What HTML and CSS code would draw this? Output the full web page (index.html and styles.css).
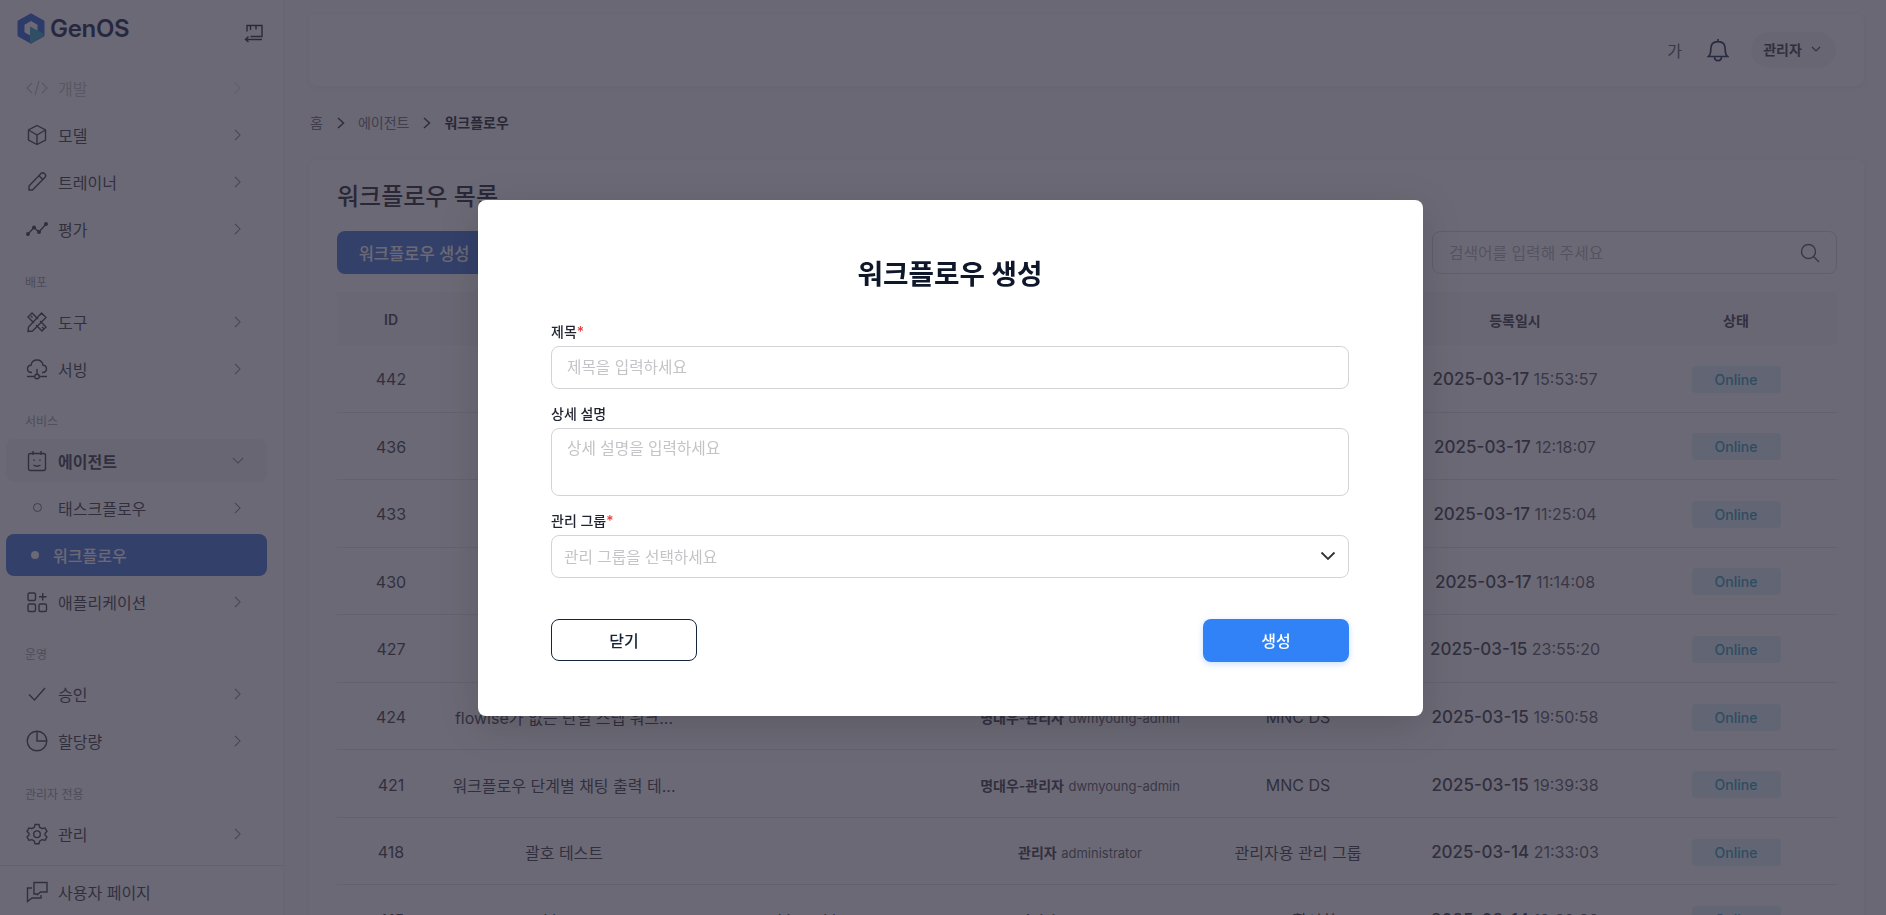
FILE: index.html
```html
<!DOCTYPE html>
<html lang="ko">
  <head>
    <meta charset="UTF-8" />
    <meta name="viewport" content="width=device-width, initial-scale=1.0" />
    <title>워크플로우 생성</title>
    <link rel="stylesheet" href="styles.css">
  </head>
  <body>
    <!-- Sidebar -->
    <aside class="sidebar">
      <div class="logo-row">
        <div class="logo">
          <svg width="28" height="31" viewBox="0 0 28 31">
            <path fill="#2a62d8" fill-rule="evenodd" stroke="#2a62d8" stroke-width="1" stroke-linejoin="round" d="M14 .8L27 8V23L14 30.200L1 23V8ZM14 7.500L7 11.500V19.500L14 23.500L21 19.500V11.500Z" />
            <path fill="#3aa6c4" d="M13 13.500L26.500 20.500V23L14 30.500L13 30Z" />
          </svg>
          <span class="logo-text">GenOS</span>
        </div>
        <button class="collapse-btn">
          <svg width="20" height="20" viewBox="0 0 20 20" fill="none" stroke="currentColor" stroke-width="1.4">
            <path d="M3 9V3H18V14H6.500M6.500 3V7.500M12 3V7M1.500 17H18M4.500 14L1.500 17L4.500 19.500" transform="translate(0 -.5)" />
          </svg>
        </button>
      </div>

      <nav class="nav">
        <a class="nav-item nav-item-faded">
          <svg class="nav-icon" viewBox="0 0 22 22" fill="none" stroke="currentColor" stroke-width="1.3"><path d="M6 6L1 11L6 16M16 6L21 11L16 16M13 4L9 18" /></svg>
          <span class="nav-label">개발</span>
          <svg class="nav-chevron" viewBox="0 0 8 14" fill="none" stroke="currentColor" stroke-width="1.2"><path d="M1 1L7 7L1 13" /></svg>
        </a>
        <a class="nav-item">
          <svg class="nav-icon" viewBox="0 0 22 22" fill="none" stroke="currentColor" stroke-width="1.4"><path d="M11 1.500L19.500 6V16L11 20.500L2.500 16V6ZM2.500 6L11 11L19.500 6M11 11V20.500" /></svg>
          <span class="nav-label">모델</span>
          <svg class="nav-chevron" viewBox="0 0 8 14" fill="none" stroke="currentColor" stroke-width="1.2"><path d="M1 1L7 7L1 13" /></svg>
        </a>
        <a class="nav-item">
          <svg class="nav-icon" viewBox="0 0 22 22" fill="none" stroke="currentColor" stroke-width="1.4"><path d="M3 15L15 2.500C16 1.500 17.500 1.500 18.700 2.700C19.900 3.900 19.900 5.300 19 6.300L6.500 19H3ZM13 4.800L17 8.800" /></svg>
          <span class="nav-label">트레이너</span>
          <svg class="nav-chevron" viewBox="0 0 8 14" fill="none" stroke="currentColor" stroke-width="1.2"><path d="M1 1L7 7L1 13" /></svg>
        </a>
        <a class="nav-item">
          <svg class="nav-icon" viewBox="0 0 22 22" fill="none" stroke="currentColor" stroke-width="1.4"><path d="M2 16L8 9.500L13 14L20 6" /><circle cx="2" cy="16" r="1.300" fill="currentColor" /><circle cx="8" cy="9.500" r="1.300" fill="currentColor" /><circle cx="13" cy="14" r="1.300" fill="currentColor" /><circle cx="20" cy="6" r="1.300" fill="currentColor" /></svg>
          <span class="nav-label">평가</span>
          <svg class="nav-chevron" viewBox="0 0 8 14" fill="none" stroke="currentColor" stroke-width="1.2"><path d="M1 1L7 7L1 13" /></svg>
        </a>

        <div class="nav-group nav-group-wide">배포</div>
        <a class="nav-item">
          <svg class="nav-icon" viewBox="0 0 22 22" fill="none" stroke="currentColor" stroke-width="1.4"><path d="M15.500 2L20 6.500L6.500 20L2 20.500L2.500 16ZM8 12L2 6L6 2L12 8M14 10L20 16L16 20L10 14M5 5L6.500 6.500M16 16L17.500 17.500" /></svg>
          <span class="nav-label">도구</span>
          <svg class="nav-chevron" viewBox="0 0 8 14" fill="none" stroke="currentColor" stroke-width="1.2"><path d="M1 1L7 7L1 13" /></svg>
        </a>
        <a class="nav-item">
          <svg class="nav-icon" viewBox="0 0 22 22" fill="none" stroke="currentColor" stroke-width="1.4"><path d="M6 14.500H5.500C3 14.500 1.500 12.800 1.500 10.800C1.500 8.800 3 7.300 5 7.200C5.500 4 8 2 11 2C14 2 16.500 4 17 7.200C19 7.300 20.500 8.800 20.500 10.800C20.500 12.800 19 14.500 16.500 14.500H16M11 11V16M1 18.500H8.500M13.500 18.500H21" /><circle cx="11" cy="18.500" r="2.300" /></svg>
          <span class="nav-label">서빙</span>
          <svg class="nav-chevron" viewBox="0 0 8 14" fill="none" stroke="currentColor" stroke-width="1.2"><path d="M1 1L7 7L1 13" /></svg>
        </a>

        <div class="nav-group">서비스</div>
        <a class="nav-item nav-item-open">
          <svg class="nav-icon" viewBox="0 0 22 22" fill="none" stroke="currentColor" stroke-width="1.4"><rect x="2.500" y="3.500" width="17" height="17" rx="2" /><path d="M7 1V5M15 1V5M8 9.500V11M14 9.500V11M7.500 15C9.500 16.500 12.500 16.500 14.500 15" /></svg>
          <span class="nav-label">에이전트</span>
          <svg class="nav-chevron-down" viewBox="0 0 14 8" fill="none" stroke="currentColor" stroke-width="1.2"><path d="M1 1L7 7L13 1" /></svg>
        </a>
        <a class="nav-item">
          <span class="nav-dot-wrap"><span class="nav-dot"></span></span>
          <span class="nav-label">태스크플로우</span>
          <svg class="nav-chevron" viewBox="0 0 8 14" fill="none" stroke="currentColor" stroke-width="1.2"><path d="M1 1L7 7L1 13" /></svg>
        </a>
        <a class="nav-item nav-item-active">
          <span class="nav-dot-wrap"><span class="nav-dot nav-dot-filled"></span></span>
          <span class="nav-label">워크플로우</span>
        </a>
        <a class="nav-item">
          <svg class="nav-icon" viewBox="0 0 22 22" fill="none" stroke="currentColor" stroke-width="1.4"><rect x="2" y="2" width="7.500" height="7.500" rx="1.500" /><rect x="2" y="13" width="7.500" height="7.500" rx="1.500" /><rect x="13" y="13" width="7.500" height="7.500" rx="1.500" /><path d="M16.700 2V9.500M13 5.700H20.500" /></svg>
          <span class="nav-label">애플리케이션</span>
          <svg class="nav-chevron" viewBox="0 0 8 14" fill="none" stroke="currentColor" stroke-width="1.2"><path d="M1 1L7 7L1 13" /></svg>
        </a>

        <div class="nav-group">운영</div>
        <a class="nav-item">
          <svg class="nav-icon" viewBox="0 0 22 22" fill="none" stroke="currentColor" stroke-width="1.4"><path d="M3 11.500L8.500 17L19 5" /></svg>
          <span class="nav-label">승인</span>
          <svg class="nav-chevron" viewBox="0 0 8 14" fill="none" stroke="currentColor" stroke-width="1.2"><path d="M1 1L7 7L1 13" /></svg>
        </a>
        <a class="nav-item">
          <svg class="nav-icon" viewBox="0 0 22 22" fill="none" stroke="currentColor" stroke-width="1.4"><circle cx="11" cy="11" r="9.800" /><path d="M11 1.200V11H20.800" /></svg>
          <span class="nav-label">할당량</span>
          <svg class="nav-chevron" viewBox="0 0 8 14" fill="none" stroke="currentColor" stroke-width="1.2"><path d="M1 1L7 7L1 13" /></svg>
        </a>

        <div class="nav-group nav-group-wide">관리자 전용</div>
        <a class="nav-item">
          <svg class="nav-icon" viewBox="0 0 22 22" fill="none" stroke="currentColor" stroke-width="1.4"><path d="M9 1.500H13L13.700 4.300L16.200 5.700L19 4.900L21 8.300L19 10.400V12L21 14L19 17.400L16.200 16.600L13.700 18L13 20.800H9L8.300 18L5.800 16.600L3 17.400L1 14L3 12V10.400L1 8.300L3 4.900L5.800 5.700L8.300 4.300Z" stroke-linejoin="round" /><circle cx="11" cy="11.200" r="3.300" /></svg>
          <span class="nav-label">관리</span>
          <svg class="nav-chevron" viewBox="0 0 8 14" fill="none" stroke="currentColor" stroke-width="1.2"><path d="M1 1L7 7L1 13" /></svg>
        </a>
      </nav>

      <a class="user-page">
        <svg class="nav-icon" viewBox="0 0 22 22" fill="none" stroke="currentColor" stroke-width="1.4"><path d="M8 13V1.500H21V11H14.500L11.500 13.500V13ZM6 7H1.500V20.500L6 17H15V14" /></svg>
        <span class="nav-label">사용자 페이지</span>
      </a>
    </aside>

    <!-- Main content -->
    <main class="main">
      <header class="topbar">
        <span class="font-size-btn">가</span>
        <svg class="bell" width="22" height="24" viewBox="0 0 22 24" fill="none" stroke="#1d2a4d" stroke-width="1.700"><path d="M1.500 18.500C3.500 17 3.800 15 3.800 11C3.800 6.500 6.500 3.700 11 3.700C15.500 3.700 18.200 6.500 18.200 11C18.200 15 18.500 17 20.500 18.500ZM11 1V3.700M7.500 18.500C7.500 24 14.500 24 14.500 18.500" /></svg>
        <div class="user-pill">
          <span>관리자</span>
          <svg width="10" height="6" viewBox="0 0 10 6" fill="none" stroke="currentColor" stroke-width="1.100"><path d="M1 1L5 5L9 1" /></svg>
        </div>
      </header>

      <div class="breadcrumb">
        <span>홈</span>
        <svg class="crumb-arrow" viewBox="0 0 8 12" fill="none" stroke="currentColor" stroke-width="1.500"><path d="M1 1L6.500 6L1 11" /></svg>
        <span>에이전트</span>
        <svg class="crumb-arrow" viewBox="0 0 8 12" fill="none" stroke="currentColor" stroke-width="1.500"><path d="M1 1L6.500 6L1 11" /></svg>
        <span class="crumb-current">워크플로우</span>
      </div>

      <section class="panel">
        <h1 class="panel-title">워크플로우 목록</h1>
        <div class="toolbar">
          <button class="btn-new">워크플로우 생성</button>
          <div class="search">
            <span class="search-text">검색어를 입력해 주세요</span>
            <svg width="20" height="20" viewBox="0 0 20 20" fill="none" stroke="currentColor" stroke-width="1.400"><circle cx="8.500" cy="8.500" r="7" /><path d="M13.500 13.500L19 19" /></svg>
          </div>
        </div>

        <div class="table">
          <div class="row row-head">
            <div>ID</div><div></div><div></div><div></div><div></div><div>등록일시</div><div>상태</div>
          </div>
          <div class="row">
            <div>442</div><div></div><div></div><div></div><div></div>
            <div><span class="date">2025-03-17</span> <span class="time">15:53:57</span></div>
            <div><span class="badge">Online</span></div>
          </div>
          <div class="row">
            <div>436</div><div></div><div></div><div></div><div></div>
            <div><span class="date">2025-03-17</span> <span class="time">12:18:07</span></div>
            <div><span class="badge">Online</span></div>
          </div>
          <div class="row">
            <div>433</div><div></div><div></div><div></div><div></div>
            <div><span class="date">2025-03-17</span> <span class="time">11:25:04</span></div>
            <div><span class="badge">Online</span></div>
          </div>
          <div class="row">
            <div>430</div><div></div><div></div><div></div><div></div>
            <div><span class="date">2025-03-17</span> <span class="time">11:14:08</span></div>
            <div><span class="badge">Online</span></div>
          </div>
          <div class="row">
            <div>427</div><div></div><div></div><div></div><div></div>
            <div><span class="date">2025-03-15</span> <span class="time">23:55:20</span></div>
            <div><span class="badge">Online</span></div>
          </div>
          <div class="row">
            <div>424</div><div class="cell-title">flowise가 없는 단일 스텝 워크...</div><div></div>
            <div><span class="owner">명대우-관리자</span> <span class="owner-id">dwmyoung-admin</span></div>
            <div>MNC DS</div>
            <div><span class="date">2025-03-15</span> <span class="time">19:50:58</span></div>
            <div><span class="badge">Online</span></div>
          </div>
          <div class="row">
            <div>421</div><div class="cell-title">워크플로우 단계별 채팅 출력 테...</div><div></div>
            <div><span class="owner">명대우-관리자</span> <span class="owner-id">dwmyoung-admin</span></div>
            <div>MNC DS</div>
            <div><span class="date">2025-03-15</span> <span class="time">19:39:38</span></div>
            <div><span class="badge">Online</span></div>
          </div>
          <div class="row">
            <div>418</div><div class="cell-title">괄호 테스트</div><div></div>
            <div><span class="owner">관리자</span> <span class="owner-id">administrator</span></div>
            <div>관리자용 관리 그룹</div>
            <div><span class="date">2025-03-14</span> <span class="time">21:33:03</span></div>
            <div><span class="badge">Online</span></div>
          </div>
          <div class="row">
            <div>415</div><div class="cell-title">kltest</div><div>kltest kltest</div>
            <div><span class="owner">관리자</span> <span class="owner-id">administrator</span></div>
            <div>NUI 활성화</div>
            <div><span class="date">2025-03-14</span> <span class="time">19:39:39</span></div>
            <div><span class="badge">Online</span></div>
          </div>
        </div>
      </section>
    </main>

    <!-- Dialog -->
    <div class="dialog-overlay">
      <div class="dialog">
        <h2 class="dialog-title">워크플로우 생성</h2>
        <form class="dialog-form">
          <div class="form-group">
            <label class="form-label">제목<span class="required">*</span></label>
            <div class="form-control">제목을 입력하세요</div>
          </div>
          <div class="form-group">
            <label class="form-label">상세 설명</label>
            <div class="form-control form-control-area">상세 설명을 입력하세요</div>
          </div>
          <div class="form-group">
            <label class="form-label">관리 그룹<span class="required">*</span></label>
            <div class="form-control form-control-select">
              <span>관리 그룹을 선택하세요</span>
              <svg width="16" height="10" viewBox="0 0 16 10" fill="none" stroke="#333" stroke-width="1.800"><path d="M1.500 1.500L8 8L14.500 1.500" /></svg>
            </div>
          </div>
          <div class="form-actions">
            <button type="button" class="btn btn-outline">닫기</button>
            <button type="button" class="btn btn-primary">생성</button>
          </div>
        </form>
      </div>
    </div>
  </body>
</html>
```

FILE: styles.css
```css
/* Reset and base styles */
* {
  margin: 0;
  padding: 0;
  box-sizing: border-box;
  font-family: Inter, "Noto Sans CJK KR", sans-serif;
}

body {
  height: 915px;
  overflow: hidden;
  display: flex;
  background-color: #fafafb;
  color: #2b2b33;
}

/* Sidebar */
.sidebar {
  width: 284px;
  height: 915px;
  flex-shrink: 0;
  background-color: #fff;
  border-right: 1px solid #f0f0f2;
  display: flex;
  flex-direction: column;
  overflow: hidden;
}

.logo-row {
  height: 64px;
  padding: 13px 19px 0 17px;
  display: flex;
  justify-content: space-between;
  align-items: flex-start;
}

.logo {
  display: flex;
  align-items: center;
  gap: 5px;
}

.logo-text {
  font-size: 24px;
  font-weight: 600;
  color: #14224c;
  letter-spacing: -0.3px;
}

.collapse-btn {
  background: none;
  border: none;
  color: #1d2430;
  margin-top: 10px;
}

.nav {
  flex: 1;
  padding: 0 16px 0 6px;
}

.nav-item {
  height: 47px;
  display: flex;
  align-items: center;
  padding: 0 20px;
  font-size: 16px;
  color: #3a3a44;
  border-radius: 8px;
}

.nav-item-faded {
  opacity: 0.3;
}

.nav-icon {
  width: 22px;
  height: 22px;
  flex-shrink: 0;
  color: #3a3a44;
}

.nav-label {
  flex: 1;
  margin-left: 10px;
}

.nav-chevron {
  width: 7px;
  height: 12px;
  margin-right: 6px;
  color: #7a7a84;
}

.nav-chevron-down {
  width: 12px;
  height: 7px;
  color: #7a7a84;
  margin-right: 3px;
}

.nav-group {
  height: 37px;
  margin-top: 8px;
  padding: 12px 0 0 19px;
  font-size: 12px;
  color: #9a9aa3;
}

.nav-group-wide {
  margin-top: 9px;
}

.nav-item-open {
  height: 43px;
  margin: 2px 0;
  background-color: #f4f4f6;
  font-weight: 700;
}

.nav-dot-wrap {
  width: 22px;
  height: 22px;
  display: flex;
  align-items: center;
  justify-content: center;
}

.nav-dot {
  width: 9px;
  height: 9px;
  border: 1.5px solid #6a6a74;
  border-radius: 50%;
}

.nav-item-active {
  height: 42px;
  margin: 3px 0 2px;
  background-color: #3f71d8;
  color: #fff;
}

.nav-item-active .nav-dot-wrap {
  margin-left: -2px;
}

.nav-item-active .nav-label {
  margin-left: 7px;
  font-weight: 500;
}

.nav-dot-filled {
  width: 8px;
  height: 8px;
  background-color: #fff;
  border: none;
}

.user-page {
  height: 50px;
  display: flex;
  align-items: center;
  padding: 2px 26px 0;
  border-top: 1px solid #e2e2e6;
  font-size: 16px;
  color: #3a3a44;
}

/* Main content */
.main {
  flex: 1;
  padding: 14px 22px 0 25px;
  min-width: 0;
}

.topbar {
  height: 72px;
  background-color: #fff;
  border-radius: 8px;
  box-shadow: 0 1px 4px rgba(0, 0, 0, 0.06);
  display: flex;
  align-items: center;
  justify-content: flex-end;
  padding: 0 28px 0 0;
}

.font-size-btn {
  font-size: 16px;
  color: #55555f;
  margin-right: 25px;
}

.bell {
  margin-right: 22px;
}

.user-pill {
  width: 85px;
  height: 36px;
  background-color: #f4f4f6;
  border-radius: 18px;
  display: flex;
  align-items: center;
  justify-content: center;
  gap: 9px;
  padding: 0 3px 3px 0;
  font-size: 14px;
  font-weight: 600;
  color: #3a3a44;
}

.breadcrumb {
  height: 72px;
  margin-bottom: 2px;
  display: flex;
  align-items: center;
  padding-left: 1px;
  font-size: 14px;
  color: #6a6a74;
}

.crumb-arrow {
  width: 8px;
  height: 12px;
  margin: 2px 13px 0 14px;
  color: #33333c;
}

.crumb-current {
  color: #22222a;
  font-weight: 600;
}

.panel {
  background-color: #fff;
  border-radius: 8px;
  box-shadow: 0 1px 4px rgba(0, 0, 0, 0.05);
  padding: 19px 27px 0 28px;
  height: 800px;
}

.panel-title {
  font-size: 24px;
  font-weight: 500;
  line-height: 36px;
  color: #22222a;
}

.toolbar {
  margin-top: 16px;
  display: flex;
  justify-content: space-between;
}

.btn-new {
  width: 154px;
  height: 43px;
  background-color: #3f71d8;
  color: #fff;
  border: none;
  border-radius: 8px;
  font-size: 16.5px;
  font-weight: 500;
}

.search {
  width: 405px;
  height: 43px;
  border: 1px solid #d8d8dc;
  border-radius: 8px;
  display: flex;
  align-items: center;
  justify-content: space-between;
  padding: 0 16px;
  color: #55555f;
}

.search-text {
  font-size: 15.8px;
  color: #b4b4ba;
}

/* Table */
.table {
  margin-top: 18px;
}

.row {
  display: grid;
  grid-template-columns: 108px 238px 276px 242px 194px 240px 202px;
  height: 67.55px;
  padding-top: 2px;
  align-items: center;
  text-align: center;
  border-bottom: 1px solid #e4e4e8;
  font-size: 16px;
  color: #3a3a44;
}

.row-head {
  height: 53px;
  background-color: #f6f6f8;
  border-bottom: none;
  font-size: 14px;
  font-weight: 600;
}

.cell-title {
  white-space: nowrap;
}

.date {
  font-weight: 500;
  font-size: 17px;
}

.time {
  font-size: 16px;
  color: #55555f;
}

.owner {
  font-size: 14px;
  font-weight: 600;
}

.owner-id {
  font-size: 13px;
  color: #55555f;
}

.badge {
  display: inline-block;
  width: 89px;
  height: 27px;
  line-height: 27px;
  background-color: #e0f2f7;
  color: #2b9cc0;
  border-radius: 4px;
  font-size: 14px;
  font-weight: 500;
}

/* Dialog */
.dialog-overlay {
  position: fixed;
  top: 0;
  left: 0;
  right: 0;
  bottom: 0;
  background-color: rgba(46, 43, 60, 0.71);
  display: flex;
  align-items: center;
  justify-content: center;
  padding-left: 15px;
  z-index: 50;
}

.dialog {
  width: 945px;
  height: 516px;
  background-color: #fff;
  border-radius: 8px;
  box-shadow: 0 10px 40px rgba(0, 0, 0, 0.15);
  padding: 0 74px 0 73px;
}

.dialog-title {
  font-size: 27.7px;
  font-weight: 700;
  line-height: 40px;
  text-align: center;
  color: #0f172a;
  padding-top: 54px;
  height: 122px;
}

.form-group {
  margin-bottom: 15px;
}

.form-label {
  display: block;
  font-size: 14px;
  font-weight: 500;
  line-height: 20px;
  height: 24px;
  color: #1f2430;
}

.required {
  color: #e53e3e;
}

.form-control {
  height: 43px;
  border: 1px solid #d4d4d8;
  border-radius: 8px;
  padding: 0 15px 2px;
  display: flex;
  align-items: center;
  font-size: 15.7px;
  color: #c4c4c8;
}

.form-control-area {
  height: 68px;
  align-items: flex-start;
  padding-top: 7px;
}

.form-control-select {
  justify-content: space-between;
  padding: 0 12px;
}

.form-actions {
  display: flex;
  justify-content: space-between;
  margin-top: 41px;
}

.btn {
  width: 146px;
  height: 42px;
  border-radius: 8px;
  font-size: 16px;
  font-weight: 500;
}

.btn-outline {
  background-color: #fff;
  border: 1px solid #14253a;
  color: #14253a;
}

.btn-primary {
  height: 43px;
  background-color: #3182f6;
  border: none;
  color: #fff;
  box-shadow: 0 2px 6px rgba(49, 130, 246, 0.25);
}
```
